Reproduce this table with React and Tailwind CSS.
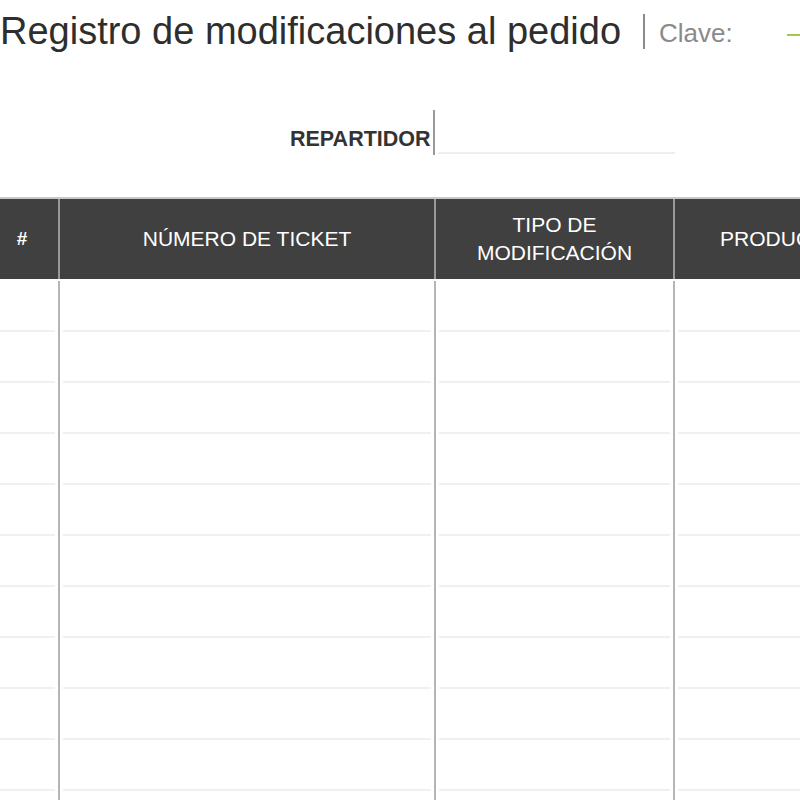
import React from "react";

const rows = Array.from({ length: 11 });

export default function App() {
  return (
    <div className="w-[800px] h-[800px] overflow-hidden bg-white font-['Liberation_Sans',Arial,sans-serif]">
      <div className="flex items-center pt-[12px] whitespace-nowrap">
        <h1 className="text-[38px] leading-none text-[#2e2e2e] font-normal">
          Registro de modificaciones al pedido
        </h1>
        <div className="ml-[22px] w-[2px] h-[35px] bg-[#8a8a8a] shrink-0" />
        <span className="ml-[14px] mt-[3px] text-[26px] leading-none text-[#8a8a8a]">Clave:</span>
        <div className="ml-[54px] w-[60px] h-[2px] bg-[#9ccc4a] shrink-0 mt-[8px]" />
      </div>

      <div className="flex items-end mt-[60px] pl-[290px] w-[800px]">
        <span className="w-[143px] text-[21.5px] leading-none font-bold text-[#333] mb-[5px] whitespace-nowrap">
          REPARTIDOR
        </span>
        <div className="w-[2px] h-[45px] bg-[#999] shrink-0" />
        <div className="ml-[3px] w-[237px] h-[2px] bg-[#eeeeee] mb-[1px]" />
      </div>

      <div className="mt-[42px] w-[1000px]">
        <div className="flex h-[82px] border-t-2 border-[#c8c8c8] bg-[#404040] text-white text-[21px] leading-[28px] text-center">
          <div className="w-[60px] shrink-0 border-r-2 border-[#999] flex items-center justify-center pr-[14px] font-bold text-[19px]">#</div>
          <div className="w-[376px] shrink-0 border-r-2 border-[#999] flex items-center justify-center">NÚMERO DE TICKET</div>
          <div className="w-[239px] shrink-0 border-r-2 border-[#999] flex items-center justify-center">
            TIPO DE<br />MODIFICACIÓN
          </div>
          <div className="w-[212px] shrink-0 border-r-2 border-[#999] flex items-center justify-center">PRODUCTO</div>
          <div className="flex-1" />
        </div>
        <div className="pt-[2px]">
          {rows.map((_, i) => (
            <div key={i} className="flex h-[51px]">
              <div className="w-[60px] shrink-0 border-r-2 border-[#b5b5b5] flex flex-col justify-end">
                <div className="h-[2px] mr-[3px] bg-[#f0f0f0]" />
              </div>
              <div className="w-[376px] shrink-0 border-r-2 border-[#b5b5b5] flex flex-col justify-end">
                <div className="h-[2px] mx-[3px] bg-[#f0f0f0]" />
              </div>
              <div className="w-[239px] shrink-0 border-r-2 border-[#b5b5b5] flex flex-col justify-end">
                <div className="h-[2px] mx-[3px] bg-[#f0f0f0]" />
              </div>
              <div className="w-[212px] shrink-0 border-r-2 border-[#b5b5b5] flex flex-col justify-end">
                <div className="h-[2px] mx-[3px] bg-[#f0f0f0]" />
              </div>
            </div>
          ))}
        </div>
      </div>
    </div>
  );
}
